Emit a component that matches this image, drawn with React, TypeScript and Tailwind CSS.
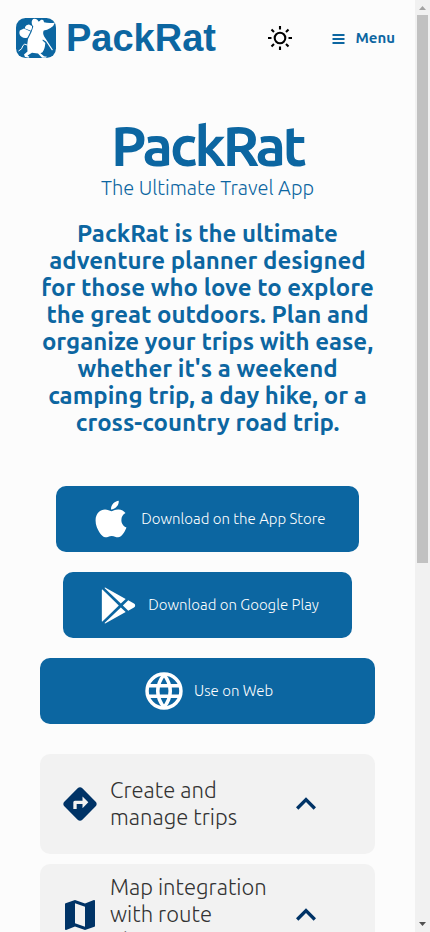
import React from "react";
import { FaApple } from "react-icons/fa";
import { IoLogoGooglePlaystore } from "react-icons/io5";
import { MdDirections, MdMap, MdKeyboardArrowUp } from "react-icons/md";

const ubuntu = "font-['Ubuntu','Open_Sans','Noto_Sans',sans-serif]";

function Logo() {
  return (
    <svg viewBox="0 0 40 40" className="h-10 w-10 shrink-0">
      <rect width="40" height="40" rx="9.500" fill="#0c66a1" />
      <g fill="#fff">
        <path d="M15.700 5Q15.500 1 18.500 .8Q21.500 .8 22.300 3.500L24 3Q24.500 1.200 26.300 1.800Q28 2.300 28 4.200Q32 5.500 38.800 4.700Q38 8 34.500 10Q31 12 27.800 12.500Q26.300 15 28.200 18.500L36.900 31.800L36 32.500L30 23.500L26.800 21.500L26.500 22.500L29.300 25Q29 31 26.500 34.300L24.500 35.300L28 38.300L31 38.800L30 39.700L26 39.700L22 35.600L16 34.800L11.500 37.500L13.500 39L12.500 39.700L9 39L8 36.500L11.500 33.500Q10.500 27 12 21L15.500 14L17.300 8.500Q16 7.500 15.700 5Z" />
        <path d="M9 9Q10 6.400 13 6.500L16 8.100Q16.600 9.500 14.900 12.800L9 10.400Z" />
        <path d="M3.800 12.500L8 10.600L14.500 13.500L11.500 19.500Q8.500 20.800 5.500 18.800Q2.400 16.500 3.800 12.500Z" />
      </g>
      <path d="M11 27Q8.500 25 7 27.500Q6.300 31.500 2.500 33" fill="none" stroke="#fff" strokeWidth="1" />
    </svg>
  );
}

function Sun() {
  return (
    <svg viewBox="0 0 26 26" className="h-[26px] w-[26px]" fill="none" stroke="#000" strokeWidth="2.100">
      <circle cx="13" cy="13" r="5.300" />
      <path d="M13 1v3.500M13 21.500V25M1 13h3.500M21.500 13H25M4.500 4.500L7 7M19 19l2.500 2.500M21.500 4.500L19 7M7 19l-2.500 2.500" />
    </svg>
  );
}

function Globe() {
  return (
    <svg viewBox="0 0 38 38" className="h-[38px] w-[38px] shrink-0" fill="none" stroke="#fff" strokeWidth="3.500">
      <circle cx="19" cy="19" r="16.950" />
      <path d="M19 2.500Q6.500 19 19 35.500M19 2.500Q31.500 19 19 35.500M3.500 13.700h31M3.500 24.300h31" />
    </svg>
  );
}

function Lines({ items }: { items: string[] }) {
  return (
    <>
      {items.map((text) => (
        <span key={text} className="block whitespace-nowrap">{text}</span>
      ))}
    </>
  );
}

export default function App() {
  return (
    <div className={`flex h-[932px] w-[430px] overflow-hidden bg-[#fcfcfc] ${ubuntu}`}>
      <div className="flex w-[415px] shrink-0 flex-col text-[#0c66a1]">
        <header className="flex h-[76px] shrink-0 items-center pl-4 pr-5">
          <Logo />
          <span className="ml-[10px] font-['Liberation_Sans',sans-serif] text-[38px] font-bold leading-[44px]">PackRat</span>
          <div className="ml-auto flex items-center">
            <Sun />
            <svg viewBox="0 0 13 12" className="ml-[39px] h-3 w-[13px]" stroke="#0c66a1" strokeWidth="1.900">
              <path d="M.5 3h12M.5 7h12M.5 11h12" />
            </svg>
            <span className="ml-[10.5px] w-[39.500px] whitespace-nowrap text-[15px] font-semibold">Menu</span>
          </div>
        </header>

        <section className="flex flex-col items-center text-center">
          <h1 className="mt-[40px] h-[60px] whitespace-nowrap text-[56px] font-semibold leading-[60px] tracking-[-3px]">PackRat</h1>
          <p className="h-[24px] whitespace-nowrap text-[20px] font-light leading-[24px]">The Ultimate Travel App</p>
          <div className="mt-5 text-[24px] font-semibold leading-[27px]">
            <Lines
              items={[
                "PackRat is the ultimate",
                "adventure planner designed",
                "for those who love to explore",
                "the great outdoors. Plan and",
                "organize your trips with ease,",
                "whether it's a weekend",
                "camping trip, a day hike, or a",
                "cross-country road trip.",
              ]}
            />
          </div>
        </section>

        <section className="mt-[50px] flex flex-col items-center gap-5 text-[15px] font-light text-white">
          <div className="flex h-[66px] w-[303px] items-center rounded-[10px] bg-[#0c66a1] pl-[34.2px]">
            <FaApple size={42} />
            <span className="ml-[9px] whitespace-nowrap">Download on the App Store</span>
          </div>
          <div className="flex h-[66px] w-[289px] items-center rounded-[10px] bg-[#0c66a1] pl-[35px]">
            <IoLogoGooglePlaystore size={41} />
            <span className="ml-[9.200px] whitespace-nowrap">Download on Google Play</span>
          </div>
          <div className="flex h-[66px] w-[335px] items-center rounded-[10px] bg-[#0c66a1] pl-[105px]">
            <Globe />
            <span className="ml-[11px] whitespace-nowrap">Use on Web</span>
          </div>
        </section>

        <section className="mx-10 mt-[30px] flex flex-col gap-[10px] text-[22px] font-light leading-[27px] text-[#333]">
          <div className="flex h-[100px] items-center rounded-[10px] bg-[#f2f2f2] pl-5">
            <MdDirections size={40} color="#003366" />
            <div className="ml-[10px] w-[176px] pb-0.5"><Lines items={["Create and", "manage trips"]} /></div>
            <MdKeyboardArrowUp size={40} color="#003366" />
          </div>
          <div className="flex h-[102px] shrink-0 items-center rounded-[10px] bg-[#f2f2f2] pl-5">
            <MdMap size={40} color="#003366" />
            <div className="ml-[10px] w-[176px] pb-1"><Lines items={["Map integration", "with route", "planning"]} /></div>
            <MdKeyboardArrowUp size={40} color="#003366" />
          </div>
        </section>
      </div>
      <aside className="flex w-[15px] shrink-0 flex-col items-center bg-[#f1f1f1]">
        <svg viewBox="0 0 15 15" className="h-[15px] w-[15px]"><path d="M4 10L7.500 6L11 10Z" fill="#a3a3a3" /></svg>
        <div className="h-[548px] w-[11px] bg-[#c1c1c1]" />
        <svg viewBox="0 0 15 15" className="mt-auto h-[15px] w-[15px]"><path d="M4 5L7.500 9L11 5Z" fill="#505050" /></svg>
      </aside>
    </div>
  );
}
